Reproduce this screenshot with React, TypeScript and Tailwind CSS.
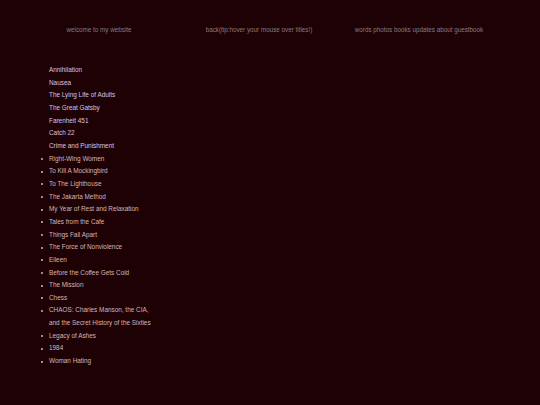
import React from "react";

const plain = [
  "Annihilation",
  "Nausea",
  "The Lying Life of Adults",
  "The Great Gatsby",
  "Farenheit 451",
  "Catch 22",
  "Crime and Punishment",
];

const bulleted: (string | string[])[] = [
  "Right-Wing Women",
  "To Kill A Mockingbird",
  "To The Lighthouse",
  "The Jakarta Method",
  "My Year of Rest and Relaxation",
  "Tales from the Cafe",
  "Things Fall Apart",
  "The Force of Nonviolence",
  "Eileen",
  "Before the Coffee Gets Cold",
  "The Mission",
  "Chess",
  ["CHAOS: Charles Manson, the CIA,", "and the Secret History of the Sixties"],
  "Legacy of Ashes",
  "1984",
  "Woman Hating",
];

export default function App() {
  return (
    <div
      className="w-[540px] h-[405px] bg-[#1d0104] overflow-hidden"
      style={{ fontFamily: '"Liberation Sans", Arial, sans-serif' }}
    >
      <div className="grid grid-cols-3 w-[480px] ml-[19px] pt-[26px] text-[6.3px] leading-[8px] text-[#8a7c80]">
        <div className="text-center">welcome to my website</div>
        <div className="text-center">back(tip:hover your mouse over titles!)</div>
        <div className="text-center">words photos books updates about guestbook</div>
      </div>
      <ul className="mt-[30px] pl-[49px] text-[6.4px] leading-[12.65px]">
        {plain.map((t) => (
          <li key={t} className="text-[#d6c6e6]">
            {t}
          </li>
        ))}
        {bulleted.map((t, i) => (
          <li key={i} className="relative text-[#d4b6b8]">
            <span className="absolute left-[-8px] top-[5.5px] w-[2px] h-[2px] rounded-full bg-[#d4b6b8]" />
            {Array.isArray(t) ? (
              <>
                {t[0]}
                <br />
                {t[1]}
              </>
            ) : (
              t
            )}
          </li>
        ))}
      </ul>
    </div>
  );
}
